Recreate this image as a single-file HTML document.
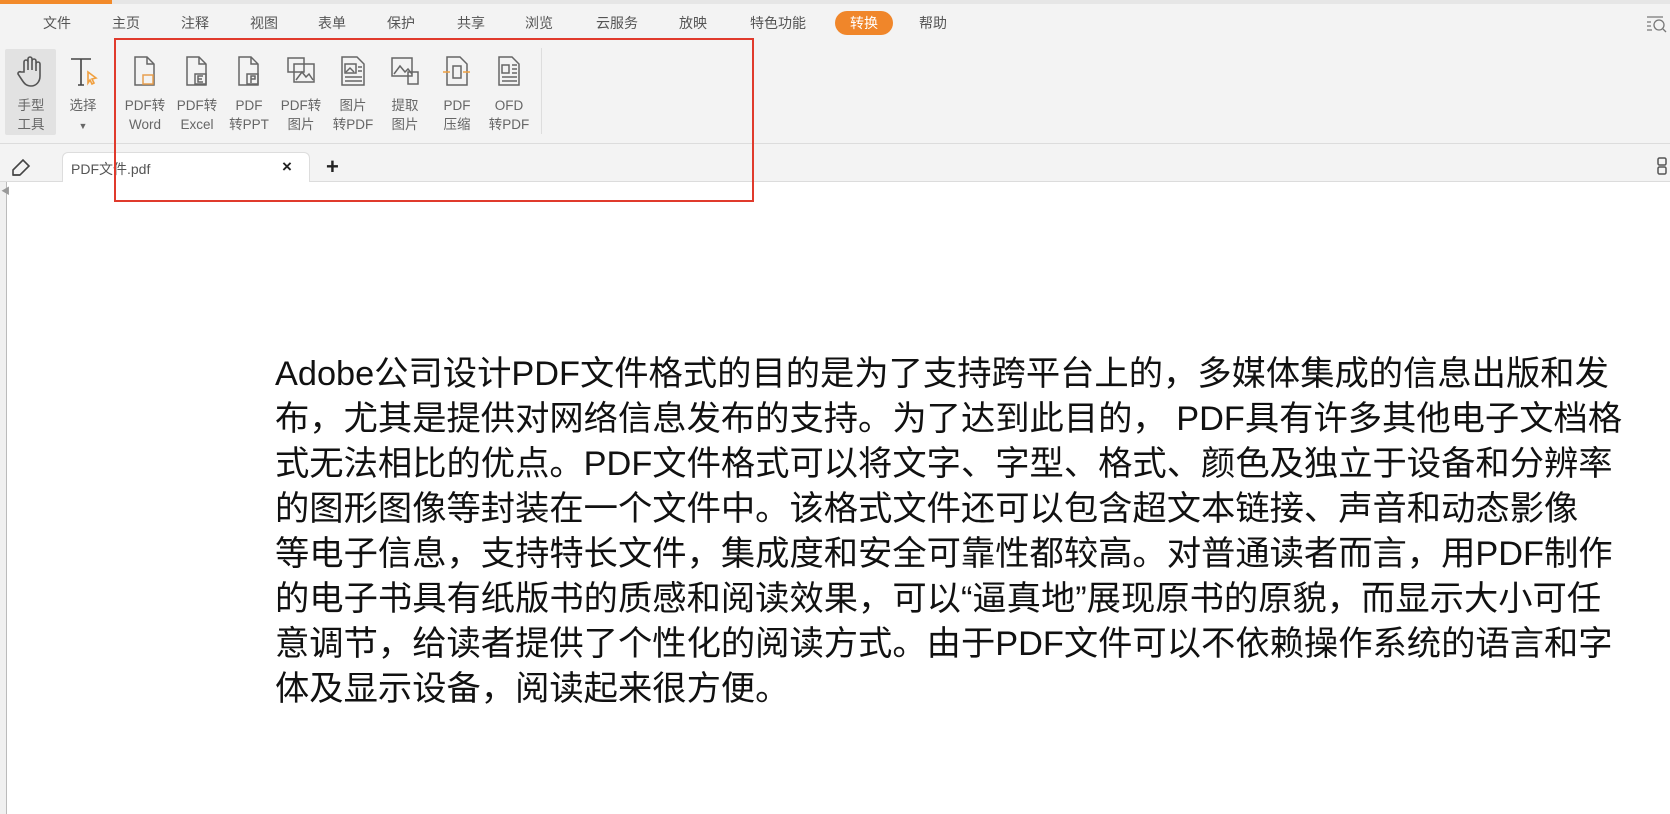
<!DOCTYPE html>
<html><head><meta charset="utf-8"><style>
*{margin:0;padding:0;box-sizing:border-box}
body{width:1670px;height:814px;background:#fff;position:relative;overflow:hidden;font-family:"Liberation Sans","Noto Sans CJK SC",sans-serif;color:#444}
.abs{position:absolute}
.top{left:0;top:0;width:1670px;height:143px;background:#f3f3f3}
.strip{left:0;top:0;width:1670px;height:4px;background:#e6e6e6}
.orange{left:0;top:0;width:112px;height:4px;background:#f28a2a}
.menu{top:13px;font-size:14px;color:#555}
.pill{left:835px;top:11px;width:58px;height:24px;border-radius:12px;background:#f0862a;color:#fff;font-size:14px;text-align:center;line-height:24px}
.btn{top:54px;width:52px;text-align:center;font-size:13.5px;line-height:19px;color:#666}
.btn svg{display:block;margin:0 auto 8px}
.tabrow{left:0;top:143px;width:1670px;height:39px;background:#f3f3f3;border-top:1px solid #dcdcdc;border-bottom:1px solid #dcdcdc}
.tab{left:62px;top:152px;width:248px;height:30px;background:#fff;border:1px solid #ddd;border-bottom:none;border-radius:6px 6px 0 0}
.red{left:114px;top:38px;width:640px;height:164px;border:2px solid #e03a2c}
.txt{left:275px;top:352px;font-size:34.3px;line-height:45px;color:#111;white-space:nowrap;font-family:"Liberation Sans","Noto Sans CJK SC",sans-serif}
</style></head><body>
<div class="abs top"></div>
<div class="abs strip"></div>
<div class="abs orange"></div>
<div class="abs menu" style="left:43px">文件</div>
<div class="abs menu" style="left:112px">主页</div>
<div class="abs menu" style="left:181px">注释</div>
<div class="abs menu" style="left:250px">视图</div>
<div class="abs menu" style="left:318px">表单</div>
<div class="abs menu" style="left:387px">保护</div>
<div class="abs menu" style="left:457px">共享</div>
<div class="abs menu" style="left:525px">浏览</div>
<div class="abs menu" style="left:596px">云服务</div>
<div class="abs menu" style="left:679px">放映</div>
<div class="abs menu" style="left:750px">特色功能</div>
<div class="abs pill">转换</div>
<div class="abs menu" style="left:919px">帮助</div>
<svg class="abs" style="left:1646px;top:14px" width="22" height="20" viewBox="0 0 22 20" fill="none" stroke="#777" stroke-width="1.3"><path d="M1 3h16M1 8h4M1 12h4M1 16h5"/><circle cx="13" cy="11" r="5"/><path d="M17 15l3 3"/></svg>

<div class="abs" style="left:5px;top:49px;width:51px;height:86px;background:#e2e2e2;border-radius:2px"></div>
<div class="abs btn" style="left:5px"><svg width="34" height="34" viewBox="0 0 34 34" fill="none" stroke="#555" stroke-width="1.6"><path d="M10 18V8a2 2 0 0 1 4 0v8V5a2 2 0 0 1 4 0v11V7a2 2 0 0 1 4 0v10V10a2 2 0 0 1 4 0v12c0 6-4 10-9 10s-7-3-9-6l-4-6a2 2 0 0 1 3-2z"/></svg>手型<br>工具</div>
<div class="abs btn" style="left:57px"><svg width="34" height="34" viewBox="0 0 34 34" fill="none" stroke="#444" stroke-width="1.6"><path d="M5 5h20M15 5v26M12 31h6"/><path d="M22 18l8 6-4 1 2 4-2 1-2-4-2 3z" stroke="#f0a040"/></svg>选择<br><span style="font-size:9px">▼</span></div>

<div class="abs btn" style="left:119px"><svg width="34" height="34" viewBox="0 0 34 34" fill="none" stroke="#666" stroke-width="1.5"><path d="M7 3h12l7 7v21H7z"/><path d="M19 3v7h7"/><rect x="15" y="21" width="10" height="9" stroke="#e8a050"/></svg>PDF转<br>Word</div>
<div class="abs btn" style="left:171px"><svg width="34" height="34" viewBox="0 0 34 34" fill="none" stroke="#666" stroke-width="1.5"><path d="M7 3h12l7 7v21H7z"/><path d="M19 3v7h7"/><rect x="15" y="20" width="11" height="10"/><path d="M23 22h-5v6h5M18 25h4"/></svg>PDF转<br>Excel</div>
<div class="abs btn" style="left:223px"><svg width="34" height="34" viewBox="0 0 34 34" fill="none" stroke="#666" stroke-width="1.5"><path d="M7 3h12l7 7v21H7z"/><path d="M19 3v7h7"/><rect x="15" y="20" width="11" height="10"/><path d="M19 29v-7h4v3h-4"/></svg>PDF<br>转PPT</div>
<div class="abs btn" style="left:275px"><svg width="34" height="34" viewBox="0 0 34 34" fill="none" stroke="#666" stroke-width="1.5"><rect x="4" y="4" width="16" height="14"/><rect x="10" y="10" width="20" height="18"/><path d="M12 26l6-8 4 5 3-3 4 6"/></svg>PDF转<br>图片</div>
<div class="abs btn" style="left:327px"><svg width="34" height="34" viewBox="0 0 34 34" fill="none" stroke="#666" stroke-width="1.5"><path d="M6 3h15l7 7v21H6z"/><rect x="9" y="10" width="11" height="9"/><path d="M10 18l4-4 4 4M22 13h4M22 17h4M9 23h17M9 27h17"/></svg>图片<br>转PDF</div>
<div class="abs btn" style="left:379px"><svg width="34" height="34" viewBox="0 0 34 34" fill="none" stroke="#666" stroke-width="1.5"><rect x="4" y="4" width="20" height="18"/><path d="M6 20l6-8 5 6 3-3 4 5"/><rect x="20" y="18" width="10" height="12"/></svg>提取<br>图片</div>
<div class="abs btn" style="left:431px"><svg width="34" height="34" viewBox="0 0 34 34" fill="none" stroke="#666" stroke-width="1.5"><path d="M7 3h13l7 7v21H7z"/><rect x="13" y="12" width="8" height="12"/><path d="M3 18h7M30 18h-7" stroke="#f0a040"/></svg>PDF<br>压缩</div>
<div class="abs btn" style="left:483px"><svg width="34" height="34" viewBox="0 0 34 34" fill="none" stroke="#666" stroke-width="1.5"><path d="M7 3h13l7 7v21H7z"/><rect x="10" y="11" width="7" height="8"/><path d="M20 11h5M20 15h5M20 19h5M10 23h15M10 27h15"/></svg>OFD<br>转PDF</div>
<div class="abs" style="left:541px;top:48px;width:1px;height:86px;background:#ddd"></div>

<div class="abs tabrow"></div>
<svg class="abs" style="left:10px;top:156px" width="24" height="22" viewBox="0 0 24 22" fill="none" stroke="#444" stroke-width="1.6"><path d="M3 14L13 4l6 6-9 9H3z"/><path d="M3 19h7"/></svg>
<div class="abs tab"></div>
<div class="abs" style="left:71px;top:159px;font-size:14px;color:#555">PDF文件.pdf</div>
<div class="abs" style="left:282px;top:157px;font-size:17px;color:#222;font-weight:bold">×</div>
<div class="abs" style="left:326px;top:154px;font-size:22px;color:#222;font-weight:bold">+</div>
<svg class="abs" style="left:1656px;top:155px" width="14" height="22" viewBox="0 0 14 22" fill="none" stroke="#555" stroke-width="1.5"><rect x="2" y="3" width="8" height="7" rx="1.5"/><rect x="2" y="12" width="8" height="7" rx="1.5"/></svg>

<div class="abs" style="left:0;top:182px;width:7px;height:632px;background:#f0f0f0;border-right:1px solid #bbb"></div>
<div class="abs" style="left:1px;top:184px;font-size:9px;color:#999">◀</div>

<div class="abs red"></div>

<div class="abs txt">Adobe公司设计PDF文件格式的目的是为了支持跨平台上的，多媒体集成的信息出版和发<br>布，尤其是提供对网络信息发布的支持。为了达到此目的， PDF具有许多其他电子文档格<br>式无法相比的优点。PDF文件格式可以将文字、字型、格式、颜色及独立于设备和分辨率<br>的图形图像等封装在一个文件中。该格式文件还可以包含超文本链接、声音和动态影像<br>等电子信息，支持特长文件，集成度和安全可靠性都较高。对普通读者而言，用PDF制作<br>的电子书具有纸版书的质感和阅读效果，可以“逼真地”展现原书的原貌，而显示大小可任<br>意调节，给读者提供了个性化的阅读方式。由于PDF文件可以不依赖操作系统的语言和字<br>体及显示设备，阅读起来很方便。</div>
</body></html>
